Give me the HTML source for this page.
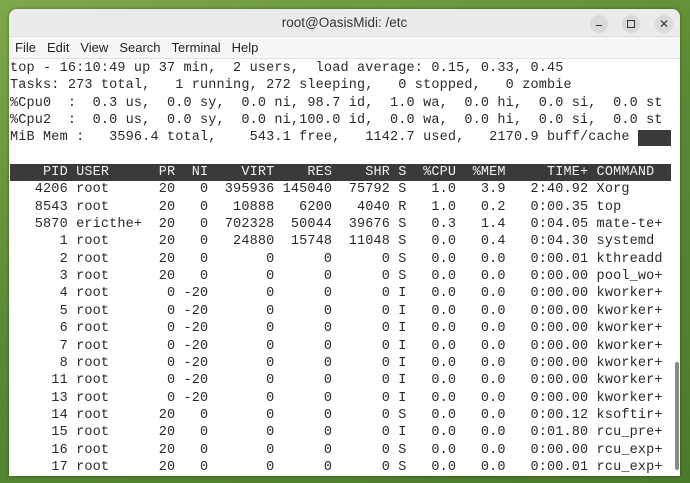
<!DOCTYPE html>
<html><head><meta charset="utf-8"><style>
html,body{margin:0;padding:0;width:690px;height:483px;overflow:hidden;background:#5f8a3a;}
body{background:linear-gradient(160deg,#7ea84a 0%,#5a8a34 45%,#4c7a2c 100%);position:relative;font-family:"Liberation Sans",sans-serif;}
.win{position:absolute;left:9px;top:9px;width:671px;height:467px;background:#fff;border-radius:8px 8px 0 0;overflow:hidden;box-shadow:0 0 3px rgba(0,0,0,.4);}
.title{height:27px;background:#ebebeb;border-bottom:1px solid #dcdcdc;text-align:center;font-size:13.5px;line-height:27px;color:#333;}
.btn{position:absolute;top:6px;width:18px;height:18px;border-radius:50%;background:#dadada;}
.menu{height:21px;background:#f7f7f7;border-bottom:1px solid #e0e0e0;font-size:13px;line-height:21px;color:#222;padding-left:6px;}
.menu span{margin-right:11px;}
pre{position:absolute;left:1px;top:51px;margin:0;font-family:"Liberation Mono",monospace;font-size:13.5px;line-height:17.35px;color:#2a2a2a;letter-spacing:0.16px;}
.hdr{background:#3a3a3a;color:#f0f0f0;display:inline-block;width:661px;}
.cur{background:#3a3a3a;display:inline-block;width:33px;height:16px;vertical-align:top;margin-top:1px;}
.sb{position:absolute;left:666px;top:353px;width:4px;height:108px;border-radius:2px;background:#888;}
</style></head><body>
<div class="win">
<div class="title">root@OasisMidi: /etc</div>
<div class="btn" style="left:581px"><div style="position:absolute;left:6px;top:10px;width:6px;height:1px;background:#333"></div></div>
<div class="btn" style="left:613px"><div style="position:absolute;left:5px;top:5px;width:6px;height:6px;border:1px solid #333"></div></div>
<div class="btn" style="left:646px;font-size:12px;line-height:18px;text-align:center;color:#333">✕</div>
<div class="menu"><span>File</span><span>Edit</span><span>View</span><span>Search</span><span>Terminal</span><span>Help</span></div>
<pre>top - 16:10:49 up 37 min,  2 users,  load average: 0.15, 0.33, 0.45
Tasks: 273 total,   1 running, 272 sleeping,   0 stopped,   0 zombie
%Cpu0  :  0.3 us,  0.0 sy,  0.0 ni, 98.7 id,  1.0 wa,  0.0 hi,  0.0 si,  0.0 st
%Cpu2  :  0.0 us,  0.0 sy,  0.0 ni,100.0 id,  0.0 wa,  0.0 hi,  0.0 si,  0.0 st
MiB Mem :   3596.4 total,    543.1 free,   1142.7 used,   2170.9 buff/cache <span class="cur"></span>

<span class="hdr">    PID USER      PR  NI    VIRT    RES    SHR S  %CPU  %MEM     TIME+ COMMAND</span>
   4206 root      20   0  395936 145040  75792 S   1.0   3.9   2:40.92 Xorg
   8543 root      20   0   10888   6200   4040 R   1.0   0.2   0:00.35 top
   5870 ericthe+  20   0  702328  50044  39676 S   0.3   1.4   0:04.05 mate-te+
      1 root      20   0   24880  15748  11048 S   0.0   0.4   0:04.30 systemd
      2 root      20   0       0      0      0 S   0.0   0.0   0:00.01 kthreadd
      3 root      20   0       0      0      0 S   0.0   0.0   0:00.00 pool_wo+
      4 root       0 -20       0      0      0 I   0.0   0.0   0:00.00 kworker+
      5 root       0 -20       0      0      0 I   0.0   0.0   0:00.00 kworker+
      6 root       0 -20       0      0      0 I   0.0   0.0   0:00.00 kworker+
      7 root       0 -20       0      0      0 I   0.0   0.0   0:00.00 kworker+
      8 root       0 -20       0      0      0 I   0.0   0.0   0:00.00 kworker+
     11 root       0 -20       0      0      0 I   0.0   0.0   0:00.00 kworker+
     13 root       0 -20       0      0      0 I   0.0   0.0   0:00.00 kworker+
     14 root      20   0       0      0      0 S   0.0   0.0   0:00.12 ksoftir+
     15 root      20   0       0      0      0 I   0.0   0.0   0:01.80 rcu_pre+
     16 root      20   0       0      0      0 S   0.0   0.0   0:00.00 rcu_exp+
     17 root      20   0       0      0      0 S   0.0   0.0   0:00.01 rcu_exp+</pre>
<div class="sb"></div>
</div>
</body></html>
